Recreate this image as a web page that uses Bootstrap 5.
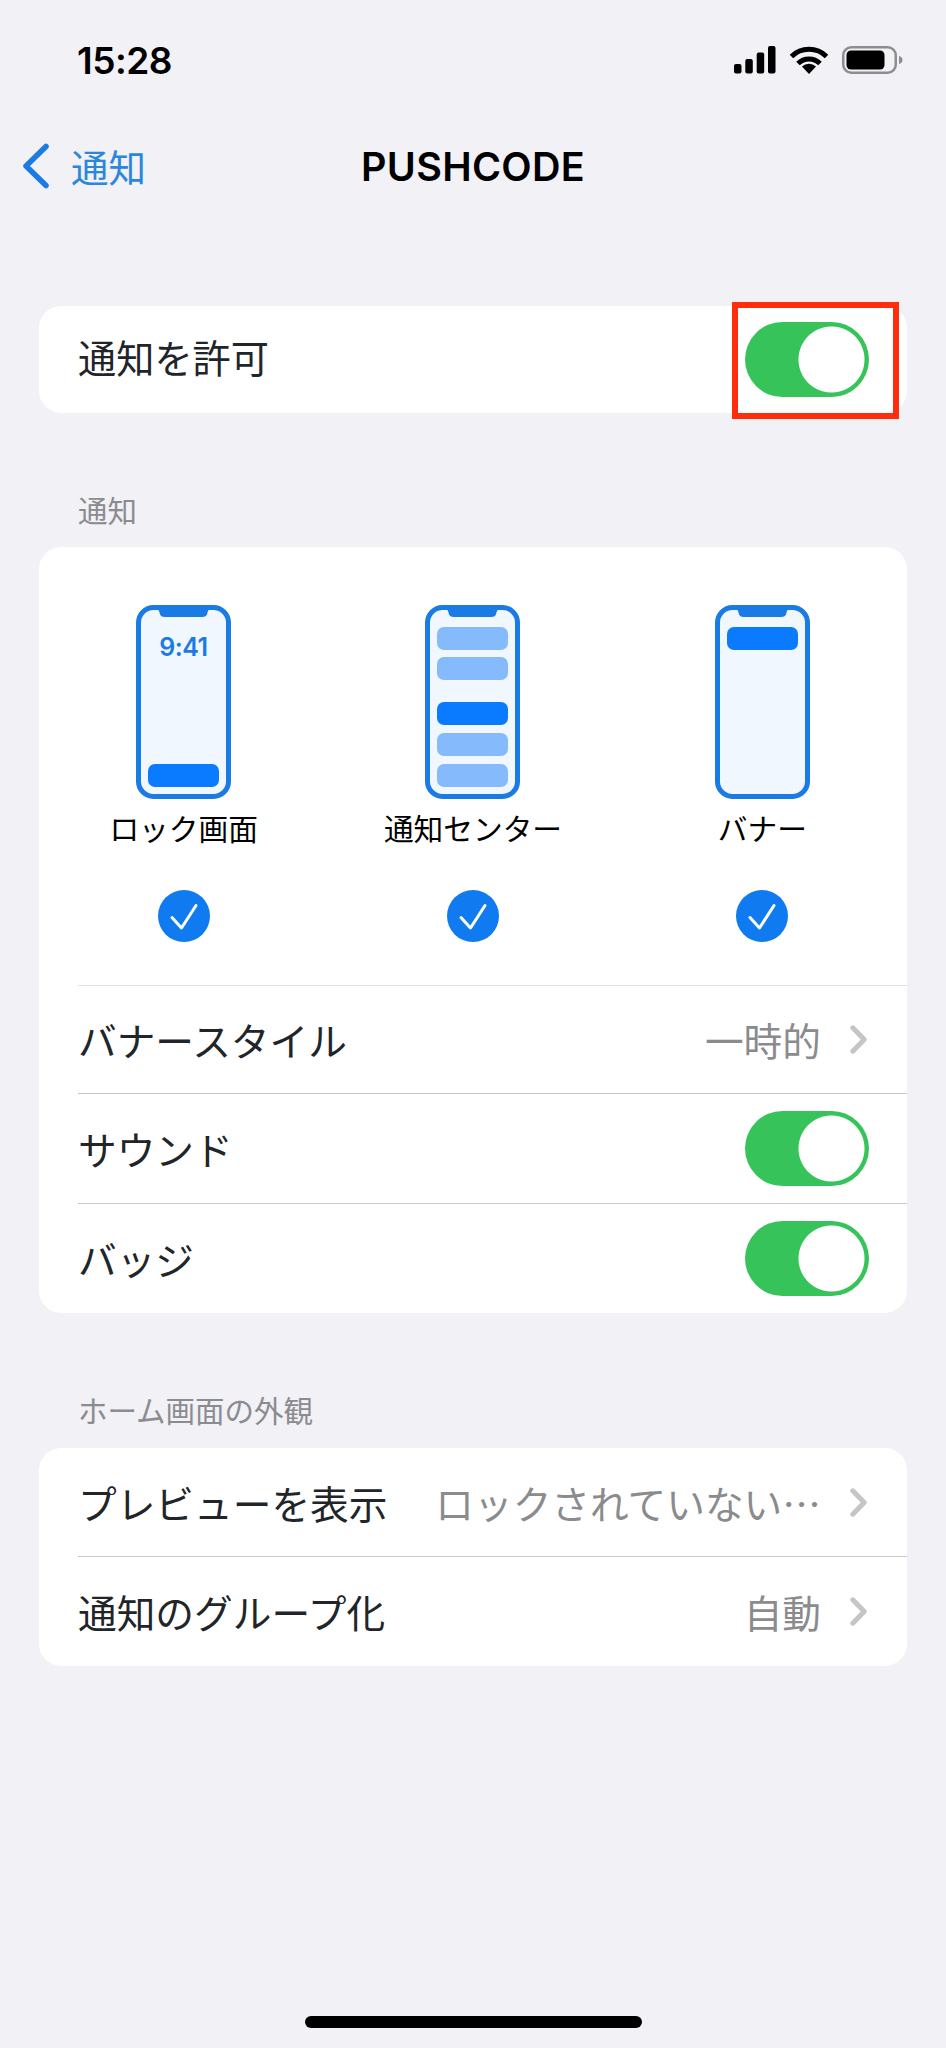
<!DOCTYPE html>
<html lang="ja">
<head>
    <meta charset="UTF-8">
    <meta name="viewport" content="width=device-width, initial-scale=1.0">
    <title>PUSHCODE</title>
    <link href="https://cdn.jsdelivr.net/npm/bootstrap@5.3.0/dist/css/bootstrap.min.css" rel="stylesheet">
    <style>
        body {
            background: #f1f1f6;
            color: #000;
            font-family: "Noto Sans CJK JP", "Noto Sans", sans-serif;
        }
        .screen { width: 946px; height: 2048px; }
        .status-bar { height: 120px; padding: 0 44px 0 77px; }
        .status-time { font: 600 37px/1 Inter, sans-serif; letter-spacing: -.5px; }
        .status-icons { gap: 13px; margin-right: -1px; }
        .nav-bar { height: 96px; padding: 0 22px 5px; }
        .nav-title { font: 600 39.500px/1 Inter, sans-serif; letter-spacing: .3px; }
        .nav-back { color: #2b86dd; font-size: 37.500px; line-height: 1; gap: 21px; }
        .set-group {
            margin: 0 39px;
            border-radius: 22px;
            border: 0;
            overflow: hidden;
        }
        .first-group { margin-top: 90px; }
        .sec-cap {
            margin: 78px 39px 20px;
            padding-left: 39px;
            height: 36px;
            line-height: 36px;
            font-size: 29.500px;
            color: #8b8b90;
        }
        .sec-cap-home { margin-bottom: 21px; }
        .set-row {
            height: 109.300px;
            margin-left: 39px;
            padding: 0 38px 0 0;
            font-size: 38.700px;
            line-height: 1;
            border-color: #c9c9cc;
            background: transparent;
        }
        .first-group .set-row { height: 107px; }
        .first-label { padding-bottom: 5px; font-size: 38.200px; }
        .set-val { color: #8b8b8e; gap: 29px; }
        .row-chevron { margin-right: 2px; }
        .form-switch .form-check-input.ios-switch {
            width: 124px;
            height: 75px;
            margin: 0;
            border: 0;
            background-color: #35c35a;
            background-image: radial-gradient(circle at 86.500px 37.500px, #fff 32.500px, transparent 33.500px);
            background-position: 0 0;
            background-size: auto;
        }
        .alert-box {
            position: absolute;
            top: 86px;
            right: 47px;
            width: 167px;
            height: 117px;
            border: 6px solid #ff2d0d;
            pointer-events: none;
        }
        .style-picker { height: 438px; padding-top: 58px; }
        .style-label { font-size: 29.700px; line-height: 1; margin: 8px 0 0; height: 42px; display: flex; align-items: center; justify-content: center; }
        .style-check { margin-top: 41px; }
        .home-bar { width: 337px; height: 12px; background: #000; border-radius: 6px; margin: auto auto 20px; }
    </style>
</head>
<body>
    <svg width="0" height="0" class="position-absolute">
        <symbol id="phone" viewBox="0 0 95 194">
            <rect x="2.500" y="2.500" width="90" height="189" rx="15" fill="#f1f7fe" stroke="#1a7be4" stroke-width="5"/>
            <path d="M19 3h57q-4 1-4.500 4.500Q71 12 66 12H29q-5 0-5.500-4.500Q23 4 19 3z" fill="#1a7be4"/>
        </symbol>
        <symbol id="check" viewBox="0 0 52 52">
            <circle cx="26" cy="26" r="26" fill="#107bf0"/>
            <path d="M14 27.500 23.500 38 38 15.500" fill="none" stroke="#fff" stroke-width="3" stroke-linecap="round" stroke-linejoin="round"/>
        </symbol>
        <symbol id="chevron" viewBox="0 0 17 29">
            <path d="M2.800 2.800 14.200 14.500 2.800 26.200" fill="none" stroke="#c5c5c8" stroke-width="5" stroke-linecap="round" stroke-linejoin="round"/>
        </symbol>
    </svg>

    <div class="screen d-flex flex-column">
        <!-- status bar -->
        <div class="status-bar d-flex align-items-center justify-content-between">
            <span class="status-time">15:28</span>
            <div class="status-icons d-flex align-items-center">
                <svg width="42" height="28" viewBox="0 0 42 28" fill="#000">
                    <rect x="0" y="18" width="7.500" height="9.500" rx="2"/>
                    <rect x="11.300" y="13" width="7.500" height="14.500" rx="2"/>
                    <rect x="22.700" y="6.500" width="7.500" height="21" rx="2"/>
                    <rect x="34" y="0" width="7.500" height="27.500" rx="2"/>
                </svg>
                <svg width="40" height="28" viewBox="0 0 40 28" fill="none" stroke="#000" stroke-width="5">
                    <path d="M2.500 10.500a25 25 0 0 1 35 0"/>
                    <path d="M9 17.500a15.500 15.500 0 0 1 22 0"/>
                    <path d="M20 28l-7-7.500a10 10 0 0 1 14 0z" fill="#000" stroke="none"/>
                </svg>
                <svg width="61" height="28" viewBox="0 0 61 28">
                    <rect x="1.250" y="1.250" width="52.500" height="25.500" rx="8" fill="none" stroke="#8e8e90" stroke-width="2.500"/>
                    <rect x="4.500" y="4.500" width="38" height="19" rx="4.500" fill="#000"/>
                    <path d="M57 10c2 .5 3.500 2 3.500 4s-1.500 3.500-3.500 4z" fill="#8e8e90"/>
                </svg>
            </div>
        </div>

        <!-- nav bar -->
        <div class="nav-bar position-relative d-flex align-items-center">
            <a class="nav-back d-flex align-items-center text-decoration-none">
                <svg width="28" height="46" viewBox="0 0 28 46" fill="none" stroke="#1a7be4" stroke-width="5.500" stroke-linecap="round" stroke-linejoin="round">
                    <path d="M24 3.500 4 23l20 19.500"/>
                </svg>
                <span>通知</span>
            </a>
            <span class="nav-title position-absolute top-50 start-50 translate-middle">PUSHCODE</span>
        </div>

        <!-- allow -->
        <div class="position-relative">
            <div class="card set-group first-group">
                <ul class="list-group list-group-flush">
                    <li class="list-group-item set-row d-flex align-items-center justify-content-between">
                        <span class="first-label">通知を許可</span>
                        <div class="form-check form-switch p-0 m-0 d-flex">
                            <input class="form-check-input ios-switch" type="checkbox" checked>
                        </div>
                    </li>
                </ul>
            </div>
            <div class="alert-box"></div>
        </div>

        <div class="sec-cap">通知</div>
        <div class="card set-group">
            <div class="style-picker row g-0 text-center">
                <div class="col-4">
                    <svg width="95" height="194" viewBox="0 0 95 194">
                        <use href="#phone"/>
                        <text x="47.500" y="51" text-anchor="middle" font-family="Inter, sans-serif" font-weight="600" font-size="25" letter-spacing="-.5" fill="#1a7be4">9:41</text>
                        <rect x="12" y="159" width="71" height="23" rx="7" fill="#0a7aff"/>
                    </svg>
                    <div class="style-label">ロック画面</div>
                    <svg class="style-check" width="52" height="52"><use href="#check"/></svg>
                </div>
                <div class="col-4">
                    <svg width="95" height="194" viewBox="0 0 95 194">
                        <use href="#phone"/>
                        <rect x="12" y="22" width="71" height="23" rx="7" fill="#85bafd"/>
                        <rect x="12" y="52" width="71" height="23" rx="7" fill="#85bafd"/>
                        <rect x="12" y="97" width="71" height="23" rx="7" fill="#0a7aff"/>
                        <rect x="12" y="128" width="71" height="23" rx="7" fill="#85bafd"/>
                        <rect x="12" y="159" width="71" height="23" rx="7" fill="#85bafd"/>
                    </svg>
                    <div class="style-label">通知センター</div>
                    <svg class="style-check" width="52" height="52"><use href="#check"/></svg>
                </div>
                <div class="col-4">
                    <svg width="95" height="194" viewBox="0 0 95 194">
                        <use href="#phone"/>
                        <rect x="12" y="22" width="71" height="23" rx="7" fill="#0a7aff"/>
                    </svg>
                    <div class="style-label">バナー</div>
                    <svg class="style-check" width="52" height="52"><use href="#check"/></svg>
                </div>
            </div>
            <ul class="list-group list-group-flush">
                <li class="list-group-item set-row d-flex align-items-center justify-content-between border-top">
                    <span>バナースタイル</span>
                    <span class="set-val d-flex align-items-center">一時的
                        <svg class="row-chevron" width="17" height="29"><use href="#chevron"/></svg>
                    </span>
                </li>
                <li class="list-group-item set-row d-flex align-items-center justify-content-between">
                    <span>サウンド</span>
                    <div class="form-check form-switch p-0 m-0 d-flex"><input class="form-check-input ios-switch" type="checkbox" checked></div>
                </li>
                <li class="list-group-item set-row d-flex align-items-center justify-content-between">
                    <span>バッジ</span>
                    <div class="form-check form-switch p-0 m-0 d-flex"><input class="form-check-input ios-switch" type="checkbox" checked></div>
                </li>
            </ul>
        </div>

        <div class="sec-cap sec-cap-home">ホーム画面の外観</div>
        <div class="card set-group">
            <ul class="list-group list-group-flush">
                <li class="list-group-item set-row d-flex align-items-center justify-content-between">
                    <span>プレビューを表示</span>
                    <span class="set-val d-flex align-items-center">ロックされていない…
                        <svg class="row-chevron" width="17" height="29"><use href="#chevron"/></svg>
                    </span>
                </li>
                <li class="list-group-item set-row d-flex align-items-center justify-content-between">
                    <span>通知のグループ化</span>
                    <span class="set-val d-flex align-items-center">自動
                        <svg class="row-chevron" width="17" height="29"><use href="#chevron"/></svg>
                    </span>
                </li>
            </ul>
        </div>

        <div class="home-bar"></div>
    </div>

    <script src="https://cdn.jsdelivr.net/npm/bootstrap@5.3.0/dist/js/bootstrap.bundle.min.js"></script>
</body>
</html>
